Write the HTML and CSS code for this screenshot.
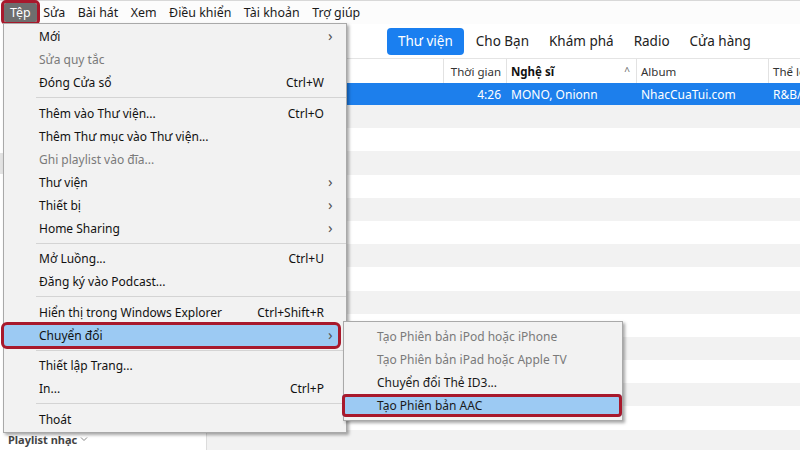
FILE: index.html
```html
<!DOCTYPE html>
<html lang="vi">
<head>
    <meta charset="UTF-8">
    <meta name="viewport" content="width=device-width, initial-scale=1.0">
    <title>Tệp - Chuyển đổi</title>
    <link rel="stylesheet" href="styles.css">
</head>
<body>

    <div class="app">
        <!-- thanh menu -->
        <nav class="menubar">
            <span class="mb-item mb-open">Tệp</span>
            <span class="mb-item">Sửa</span>
            <span class="mb-item">Bài hát</span>
            <span class="mb-item">Xem</span>
            <span class="mb-item">Điều khiển</span>
            <span class="mb-item">Tài khoản</span>
            <span class="mb-item">Trợ giúp</span>
        </nav>

        <div class="main">
            <aside class="sidebar">
                <!-- danh sách thư viện bị menu che -->
                <div class="side-list">
                    <div class="side-item"></div>
                    <div class="side-item"></div>
                    <div class="side-item"></div>
                    <div class="side-item active"></div>
                    <div class="side-item"></div>
                </div>
                <div class="side-foot">
                    Playlist nhạc
                    <svg width="8" height="6" viewBox="0 0 8 6"><path d="M1 1.5 L4 4.5 L7 1.5" fill="none" stroke="#888" stroke-width="1"/></svg>
                </div>
            </aside>

            <section class="content">
                <div class="tabs">
                    <span class="tab active">Thư viện</span>
                    <span class="tab">Cho Bạn</span>
                    <span class="tab">Khám phá</span>
                    <span class="tab">Radio</span>
                    <span class="tab">Cửa hàng</span>
                </div>

                <div class="table">
                    <div class="row head">
                        <span class="cell"></span>
                        <span class="cell num">Thời gian</span>
                        <span class="cell sorted">Nghệ sĩ <b class="caret">^</b></span>
                        <span class="cell">Album</span>
                        <span class="cell">Thể lo</span>
                    </div>
                    <div class="row selected">
                        <span class="cell"></span>
                        <span class="cell num">4:26</span>
                        <span class="cell">MONO, Onionn</span>
                        <span class="cell">NhacCuaTui.com</span>
                        <span class="cell">R&amp;B/</span>
                    </div>
                    <div class="row"></div>
                    <div class="row"></div>
                    <div class="row"></div>
                    <div class="row"></div>
                    <div class="row"></div>
                    <div class="row"></div>
                    <div class="row"></div>
                    <div class="row"></div>
                    <div class="row"></div>
                    <div class="row"></div>
                    <div class="row"></div>
                    <div class="row"></div>
                    <div class="row"></div>
                    <div class="row"></div>
                    <div class="row"></div>
                </div>
            </section>
        </div>

        <!-- menu Tệp đang mở -->
        <div class="menu file-menu">
            <div class="item sub"><span>Mới</span><span></span><i>›</i></div>
            <div class="item off"><span>Sửa quy tắc</span><span></span><i></i></div>
            <div class="item"><span>Đóng Cửa sổ</span><span>Ctrl+W</span><i></i></div>
            <div class="sep"></div>
            <div class="item"><span>Thêm vào Thư viện...</span><span>Ctrl+O</span><i></i></div>
            <div class="item"><span>Thêm Thư mục vào Thư viện...</span><span></span><i></i></div>
            <div class="item off"><span>Ghi playlist vào đĩa...</span><span></span><i></i></div>
            <div class="item sub"><span>Thư viện</span><span></span><i>›</i></div>
            <div class="item sub"><span>Thiết bị</span><span></span><i>›</i></div>
            <div class="item sub"><span>Home Sharing</span><span></span><i>›</i></div>
            <div class="sep"></div>
            <div class="item"><span>Mở Luồng...</span><span>Ctrl+U</span><i></i></div>
            <div class="item"><span>Đăng ký vào Podcast...</span><span></span><i></i></div>
            <div class="sep"></div>
            <div class="item"><span>Hiển thị trong Windows Explorer</span><span>Ctrl+Shift+R</span><i></i></div>
            <div class="item sub hot"><span>Chuyển đổi</span><span></span><i>›</i></div>
            <div class="sep"></div>
            <div class="item"><span>Thiết lập Trang...</span><span></span><i></i></div>
            <div class="item"><span>In...</span><span>Ctrl+P</span><i></i></div>
            <div class="sep"></div>
            <div class="item"><span>Thoát</span><span></span><i></i></div>
        </div>

        <!-- menu con Chuyển đổi -->
        <div class="menu sub-menu">
            <div class="item off"><span>Tạo Phiên bản iPod hoặc iPhone</span></div>
            <div class="item off"><span>Tạo Phiên bản iPad hoặc Apple TV</span></div>
            <div class="item"><span>Chuyển đổi Thẻ ID3...</span></div>
            <div class="item hot"><span>Tạo Phiên bản AAC</span></div>
        </div>
    </div>

</body>
</html>
```

FILE: styles.css
```css
* {
    margin: 0;
    padding: 0;
    box-sizing: border-box;
}
html, body {
    width: 800px;
    height: 450px;
    overflow: hidden;
    background: #fff;
    font-family: "Noto Sans", "Open Sans", sans-serif;
    color: #1a1a1a;
}
.app {
    position: relative;
    height: 100%;
    display: flex;
    flex-direction: column;
}

/* thanh menu trên cùng */
.menubar {
    height: 24px;
    flex-shrink: 0;
    display: flex;
    align-items: center;
    gap: 0.5px;
    padding-left: 4px;
    font-size: 12.4px;
    background: #fcfcfc;
    border-top: 1px solid #d8d8d8;
}
.mb-item {
    height: 19px;
    line-height: 19px;
    padding: 0 6px;
}
.mb-open {
    background: #6e6e6e;
    color: #fff;
    outline: 3px solid #a8192c;
    border-radius: 2px;
}

.main {
    flex: 1;
    display: flex;
    min-height: 0;
}
.sidebar {
    width: 207px;
    flex-shrink: 0;
    border-right: 1px solid #dcdcdc;
    display: flex;
    flex-direction: column;
    justify-content: space-between;
    padding-top: 66px;
}
.side-item {
    height: 21px;
}
.side-item.active {
    background: #e3e3e3;
}
.side-foot {
    height: 22px;
    padding-left: 8px;
    font-size: 11px;
    font-weight: bold;
    color: #444;
    display: flex;
    align-items: center;
    gap: 3px;
}

.content {
    flex: 1;
    min-height: 0;
    display: flex;
    flex-direction: column;
}
.tabs {
    height: 34px;
    flex-shrink: 0;
    display: flex;
    align-items: center;
    padding-left: 180px;
    font-size: 13.5px;
}
.tab {
    height: 27px;
    line-height: 27px;
    padding: 0 10px;
    border-radius: 4px;
    color: #222;
}
.tab.active {
    background: #1a7ff0;
    color: #fff;
    padding: 0 11px;
    margin-right: 2px;
}

.table {
    flex: 1;
    min-height: 0;
    overflow: hidden;
    border-top: 1px solid #e4e4e4;
}
.row {
    height: 23.2px;
    display: grid;
    grid-template-columns: 236px 63px 130px 132px 1fr;
    align-items: center;
    white-space: nowrap;
}
.row:nth-child(odd) {
    background: #f2f2f2;
}
.row.head {
    height: 24px;
    background: #fff;
    font-size: 11.5px;
    color: #333;
}
.row.head .cell + .cell {
    border-left: 1px solid #e2e2e2;
}
.row.head .cell {
    height: 100%;
    display: flex;
    align-items: center;
    padding-left: 4px;
}
.row.head .num {
    justify-content: flex-end;
    padding-right: 5px;
}
.row.head .sorted {
    font-weight: bold;
    color: #111;
    justify-content: space-between;
    padding-right: 6px;
}
.caret {
    font-weight: normal;
    font-size: 10px;
    color: #666;
}
.row.selected {
    height: 22px;
    background: #1d7fec;
    color: #fff;
    font-size: 12px;
}
.cell {
    padding-left: 5px;
    overflow: hidden;
}
.row.selected .num {
    text-align: right;
    padding-right: 5px;
}

/* menu thả xuống */
.menu {
    position: absolute;
    background: #f2f2f2;
    border: 1px solid #a9a9a9;
    box-shadow: 2px 2px 3px rgba(0, 0, 0, 0.35);
    font-size: 12px;
}
.file-menu {
    left: 3px;
    top: 23px;
    width: 344px;
    padding: 1px 0 1px;
}
.file-menu .item {
    height: 23px;
    display: grid;
    grid-template-columns: 1fr auto 22px;
    align-items: center;
    padding-left: 35px;
    color: #111;
}
.item i {
    font-style: normal;
    font-size: 15px;
    color: #555;
    padding-left: 4px;
    line-height: 1;
    margin-top: -2px;
}
.item.off {
    color: #7a7a7a;
}
.sep {
    height: 7.5px;
    margin-left: 32px;
    display: flex;
    align-items: center;
}
.sep::after {
    content: "";
    flex: 1;
    height: 1px;
    background: #d4d4d4;
}
.item.hot {
    background: #9ccaf3;
}
.file-menu .item.hot {
    margin: 0 7px 0 -1px;
    padding-left: 36px;
    grid-template-columns: 1fr auto 15px;
    outline: 3px solid #a8192c;
    outline-offset: -1px;
    border-radius: 4px;
}

.sub-menu {
    left: 343px;
    top: 321px;
    width: 280px;
    padding: 3px 0 3px;
}
.sub-menu .item {
    height: 23px;
    line-height: 23px;
    padding-left: 33px;
}
.sub-menu .item.hot {
    margin-left: -2px;
    padding-left: 35px;
    outline: 3px solid #a8192c;
    outline-offset: -3px;
    border-radius: 4px;
}
```
